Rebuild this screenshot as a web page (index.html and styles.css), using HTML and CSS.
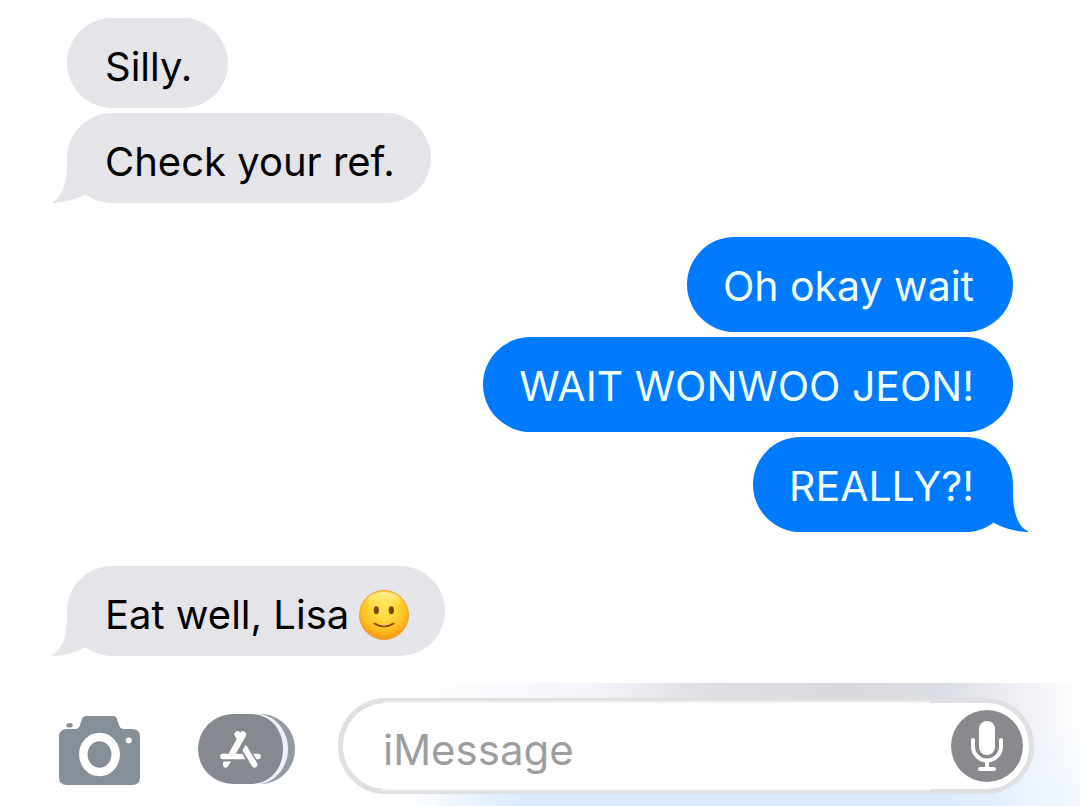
FILE: index.html
```html
<!DOCTYPE html>
<html lang="en">
<head>
<meta charset="utf-8">
<meta name="viewport" content="width=device-width, initial-scale=1">
<title>Messages</title>
<link rel="stylesheet" href="styles.css">
</head>
<body>
<main class="thread">
  <section class="group received">
    <p class="bubble">Silly.</p>
    <p class="bubble">Check your ref.<svg class="tail" viewBox="0 0 34 48" aria-hidden="true"><path d="M15 0V10C15 29 9 44 0 47Q-2 48 2 48Q19 47 34 39V0Z"/></svg></p>
  </section>
  <section class="group sent">
    <p class="bubble">Oh okay wait</p>
    <p class="bubble">WAIT WONWOO JEON!</p>
    <p class="bubble">REALLY?!<svg class="tail" viewBox="0 0 34 48" aria-hidden="true"><path d="M15 0V10C15 29 9 44 0 47Q-2 48 2 48Q19 47 34 39V0Z"/></svg></p>
  </section>
  <section class="group received">
    <p class="bubble with-emoji"><span>Eat well, Lisa</span>
      <svg class="emoji" viewBox="0 0 50 50" role="img" aria-label="slightly smiling face">
        <defs>
          <radialGradient id="face" cx="25" cy="18" r="34" gradientUnits="userSpaceOnUse">
            <stop offset="0" stop-color="#ffe650"/>
            <stop offset=".35" stop-color="#ffd93a"/>
            <stop offset=".7" stop-color="#ffb91c"/>
            <stop offset="1" stop-color="#f08a10"/>
          </radialGradient>
          <linearGradient id="shine" x1="0" y1="0" x2="0" y2="1">
            <stop offset="0" stop-color="#fff6b4" stop-opacity=".8"/>
            <stop offset="1" stop-color="#ffe75a" stop-opacity="0"/>
          </linearGradient>
        </defs>
        <circle cx="25" cy="25" r="24.5" fill="url(#face)" stroke="#e3a63a" stroke-width="1"/>
        <ellipse cx="25" cy="11" rx="17" ry="9" fill="url(#shine)"/>
        <ellipse cx="17.3" cy="20.3" rx="2.6" ry="4" fill="#7b4305"/>
        <ellipse cx="32.3" cy="20.3" rx="2.6" ry="4" fill="#7b4305"/>
        <path d="M15.5 33.5Q25 39.5 34.5 33.5" fill="none" stroke="#874606" stroke-width="1.7" stroke-linecap="round"/>
      </svg>
      <svg class="tail" viewBox="0 0 34 48" aria-hidden="true"><path d="M15 0V10C15 29 9 44 0 47Q-2 48 2 48Q19 47 34 39V0Z"/></svg>
    </p>
  </section>
</main>
<form class="composer">
  <button class="tool" type="button" aria-label="Camera">
    <svg class="camera" viewBox="0 0 81 69" aria-hidden="true">
      <path fill="#868e98" d="M8 13H16Q20 13 21 9L23 3Q24 0 27 0H54Q57 0 58 3L60 9Q61 13 65 13H73Q81 13 81 21V61Q81 69 73 69H8Q0 69 0 61V21Q0 13 8 13Z"/>
      <ellipse cx="10.5" cy="9.2" rx="3.2" ry="2.3" fill="#868e98"/>
      <ellipse cx="40.5" cy="38.5" rx="16.2" ry="17.5" fill="none" stroke="#fff" stroke-width="8.5"/>
      <circle cx="69.7" cy="24.5" r="3" fill="#fff"/>
    </svg>
  </button>
  <button class="tool" type="button" aria-label="Apps">
    <svg class="apps" viewBox="0 0 97 70" aria-hidden="true">
      <path fill="#929aa4" d="M55 0H65C84 2 97 17 97 35S84 68 65 70H55Z"/>
      <path fill="#edf1f6" d="M55 0H63C79 3 90 18 90 35S79 67 63 70H55Z"/>
      <path fill="#868990" d="M35 0H54C74 1 85 17 85 35S74 69 54 70H35A35 35 0 0 1 35 0Z"/>
      <g fill="none" stroke="#fff" stroke-linecap="round">
        <path stroke-width="5.6" d="M25 42.500H60"/>
        <path stroke="#868990" stroke-width="9.500" stroke-linecap="butt" d="M43 28L54.500 48"/>
        <path stroke-width="6" d="M46.500 34L56.500 50.500"/>
        <path stroke="#868990" stroke-width="9" stroke-linecap="butt" d="M45.500 26L38.500 37"/>
        <path stroke-width="6.500" d="M39.700 20.500L41.500 23M45 20.500L34 40"/>
      </g>
      <path fill="#fff" d="M25.500 47.600H33Q31 51 29.500 53Q27.500 54.500 25.700 53Q24.500 51 25.500 47.600Z"/>
    </svg>
  </button>
  <div class="field">
    <input class="message" type="text" placeholder="iMessage" aria-label="iMessage">
    <button class="mic" type="button" aria-label="Dictate">
      <svg viewBox="0 0 72 72" aria-hidden="true">
        <circle cx="36" cy="36" r="36" fill="#8a898e"/>
        <rect x="28" y="11" width="16" height="34" rx="8" fill="#fff"/>
        <path d="M22 30V36.500A14 14 0 0 0 50 36.500V30M36 51V59M29 59H43" fill="none" stroke="#fff" stroke-width="4" stroke-linecap="round"/>
      </svg>
    </button>
  </div>
</form>
</body>
</html>
```
FILE: styles.css
```css
* {
  box-sizing: border-box;
}

body {
  margin: 0;
  min-height: 100vh;
  display: flex;
  flex-direction: column;
  background: #fefefe;
  font-family: Inter, "Liberation Sans", sans-serif;
  font-size: 42px;
  line-height: 54px;
}

.thread {
  flex: 1;
  display: flex;
  flex-direction: column;
  gap: 34px;
  padding: 18px 67px 27px;
}

.group {
  display: flex;
  flex-direction: column;
  gap: 5px;
}

.received {
  align-items: flex-start;
  color: #000;
  font-size: 40px;
  --bubble: #e5e4e9;
}

.sent {
  align-items: flex-end;
  color: #f0ffff;
  font-size: 41px;
  --bubble: #007aff;
}

.bubble {
  position: relative;
  margin: 0;
  border-radius: 48px;
  background: var(--bubble);
}

.received .bubble {
  padding: 22px 36px 14px 38px;
}

.sent .bubble {
  padding: 22px 39px 19px 36px;
}

.with-emoji {
  display: flex;
  align-items: center;
  gap: 10px;
}

.emoji {
  width: 50px;
  height: 50px;
}

.tail {
  position: absolute;
  bottom: 0;
  left: -15px;
  width: 34px;
  height: 48px;
  fill: var(--bubble);
}

.sent .tail {
  left: auto;
  right: -15px;
  transform: scaleX(-1);
}

.composer {
  position: relative;
  isolation: isolate;
  display: flex;
  align-items: center;
  padding: 15px 46px 12px 59px;
  background:
    linear-gradient(transparent 60%, #fefefe 95%),
    linear-gradient(90deg, #fefefe 38%, #f3f5fb 55%, #e0dfe4 64%, #dadade 78%, #dadde3 87%, #f0f1f6 95%, #fefefe 100%);
}

.composer::before {
  content: "";
  position: absolute;
  z-index: -1;
  inset: 30% 0 0;
  background: linear-gradient(90deg, transparent 38%, #dbeafc 48%, #dbeafc 88%, #f4f9ff 100%);
  mask-image: linear-gradient(transparent, #000 80%);
}

.tool,
.mic {
  display: block;
  flex: none;
  padding: 0;
  border: 0;
  background: none;
}

.tool svg,
.mic svg {
  display: block;
}

.camera {
  width: 81px;
  height: 69px;
  margin-top: 9px;
}

.apps {
  width: 97px;
  height: 70px;
  margin: 6px 43px 0 58px;
}

.field {
  position: relative;
  flex: 1;
  min-width: 0;
  display: flex;
  align-items: center;
  padding: 7px 6px 7px 40px;
  border: 5px solid #dfe0e1;
  border-radius: 48px;
  background: #fff;
}

.field::before {
  content: "";
  position: absolute;
  inset: -2px 99px -2px 40px;
  border: solid #f3f3f3;
  border-width: 2px 0;
  pointer-events: none;
}

.message {
  flex: 1;
  min-width: 0;
  height: 72px;
  padding: 6px 0 0;
  border: 0;
  outline: 0;
  background: none;
  color: #000;
  font: inherit;
}

.message::placeholder {
  color: #9e9e9e;
  opacity: 1;
}

.mic svg {
  width: 72px;
  height: 72px;
}
```
